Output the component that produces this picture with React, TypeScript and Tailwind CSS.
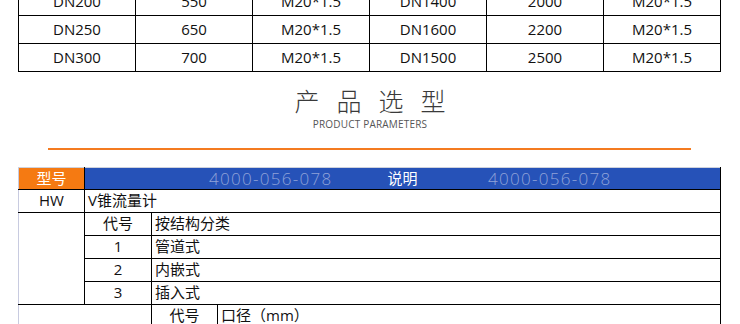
const sizes = [
  ['DN200', '550', 'M20*1.5', 'DN1400', '2000', 'M20*1.5'],
  ['DN250', '650', 'M20*1.5', 'DN1600', '2200', 'M20*1.5'],
  ['DN300', '700', 'M20*1.5', 'DN1500', '2500', 'M20*1.5'],
];

const types = [
  { code: '1', name: '管道式' },
  { code: '2', name: '内嵌式' },
  { code: '3', name: '插入式' },
];

const cell = 'border border-black h-[23px] p-0 leading-none';

export default function App() {
  return (
    <div
      className="w-[740px] h-[324px] overflow-hidden bg-white text-[#111]"
      style={{ fontFamily: '"Open Sans", "Noto Sans CJK SC", sans-serif' }}
    >
      {/* size table, scrolled so only its last rows show */}
      <table className="ml-[18px] mt-[-13px] w-[703px] table-fixed border-collapse text-[15px]">
        <tbody>
          {sizes.map((row) => (
            <tr key={row[0]} className="h-[28px]">
              {row.map((v, i) => (
                <td key={i} className="border border-black p-0 text-center leading-none">
                  {v}
                </td>
              ))}
            </tr>
          ))}
        </tbody>
      </table>

      <div className="mt-[16px] flex flex-col items-center">
        <div
          className="h-[25px] overflow-visible pl-[17px] text-[25px] font-light leading-[25px] tracking-[17px] text-[#3a3a3a]"
          style={{ fontFamily: '"Noto Sans CJK SC", sans-serif' }}
        >
          产品选型
        </div>
        <div className="mt-[5px] text-[10px] leading-[12px] tracking-[0.2px] text-[#555]">
          PRODUCT PARAMETERS
        </div>
      </div>

      <div className="ml-[48px] mt-[18px] h-[1.5px] w-[643px] bg-[#f47b20]" />

      {/* selection table */}
      <table className="ml-[18px] mt-[17px] w-[703px] table-fixed border-collapse text-[15px]">
        <colgroup>
          <col className="w-[66px]" />
          <col className="w-[67px]" />
          <col className="w-[66px]" />
          <col />
        </colgroup>
        <tbody>
          <tr className="h-[22px]">
            <td className="border-l border-t border-b border-r border-l-[#c8cbe0] border-t-[#cfd2dc] border-b-black border-r-black bg-[#f57a12] p-0 text-center leading-none text-white">
              型号
            </td>
            <td
              colSpan={3}
              className="relative overflow-hidden border-t border-b border-r border-t-[#cfd2dc] border-b-black border-r-black bg-[#2652b8] p-0 text-center leading-none text-white"
            >
              <span className="relative z-10">说明</span>
              <span className="absolute left-[124px] top-[2px] text-[17px] font-light leading-none tracking-[1.3px] text-[#8fa2d8]">
                4000-056-078
              </span>
              <span className="absolute left-[403px] top-[2px] text-[17px] font-light leading-none tracking-[1.3px] text-[#8fa2d8]">
                4000-056-078
              </span>
            </td>
          </tr>
          <tr>
            <td className={`${cell} border-l-[#c8cbe0] text-center`}>HW</td>
            <td colSpan={3} className={`${cell} pl-[3px]`}>
              V锥流量计
            </td>
          </tr>
          <tr>
            <td rowSpan={4} className={`${cell} border-l-[#c8cbe0]`} />
            <td className={`${cell} text-center`}>代号</td>
            <td colSpan={2} className={`${cell} pl-[3px]`}>
              按结构分类
            </td>
          </tr>
          {types.map((t) => (
            <tr key={t.code}>
              <td className={`${cell} text-center`}>{t.code}</td>
              <td colSpan={2} className={`${cell} pl-[3px]`}>
                {t.name}
              </td>
            </tr>
          ))}
          <tr>
            <td colSpan={2} className={`${cell} border-l-[#c8cbe0]`} />
            <td className={`${cell} text-center`}>代号</td>
            <td className={`${cell} pl-[3px]`}>口径（mm）</td>
          </tr>
        </tbody>
      </table>
    </div>
  );
}
